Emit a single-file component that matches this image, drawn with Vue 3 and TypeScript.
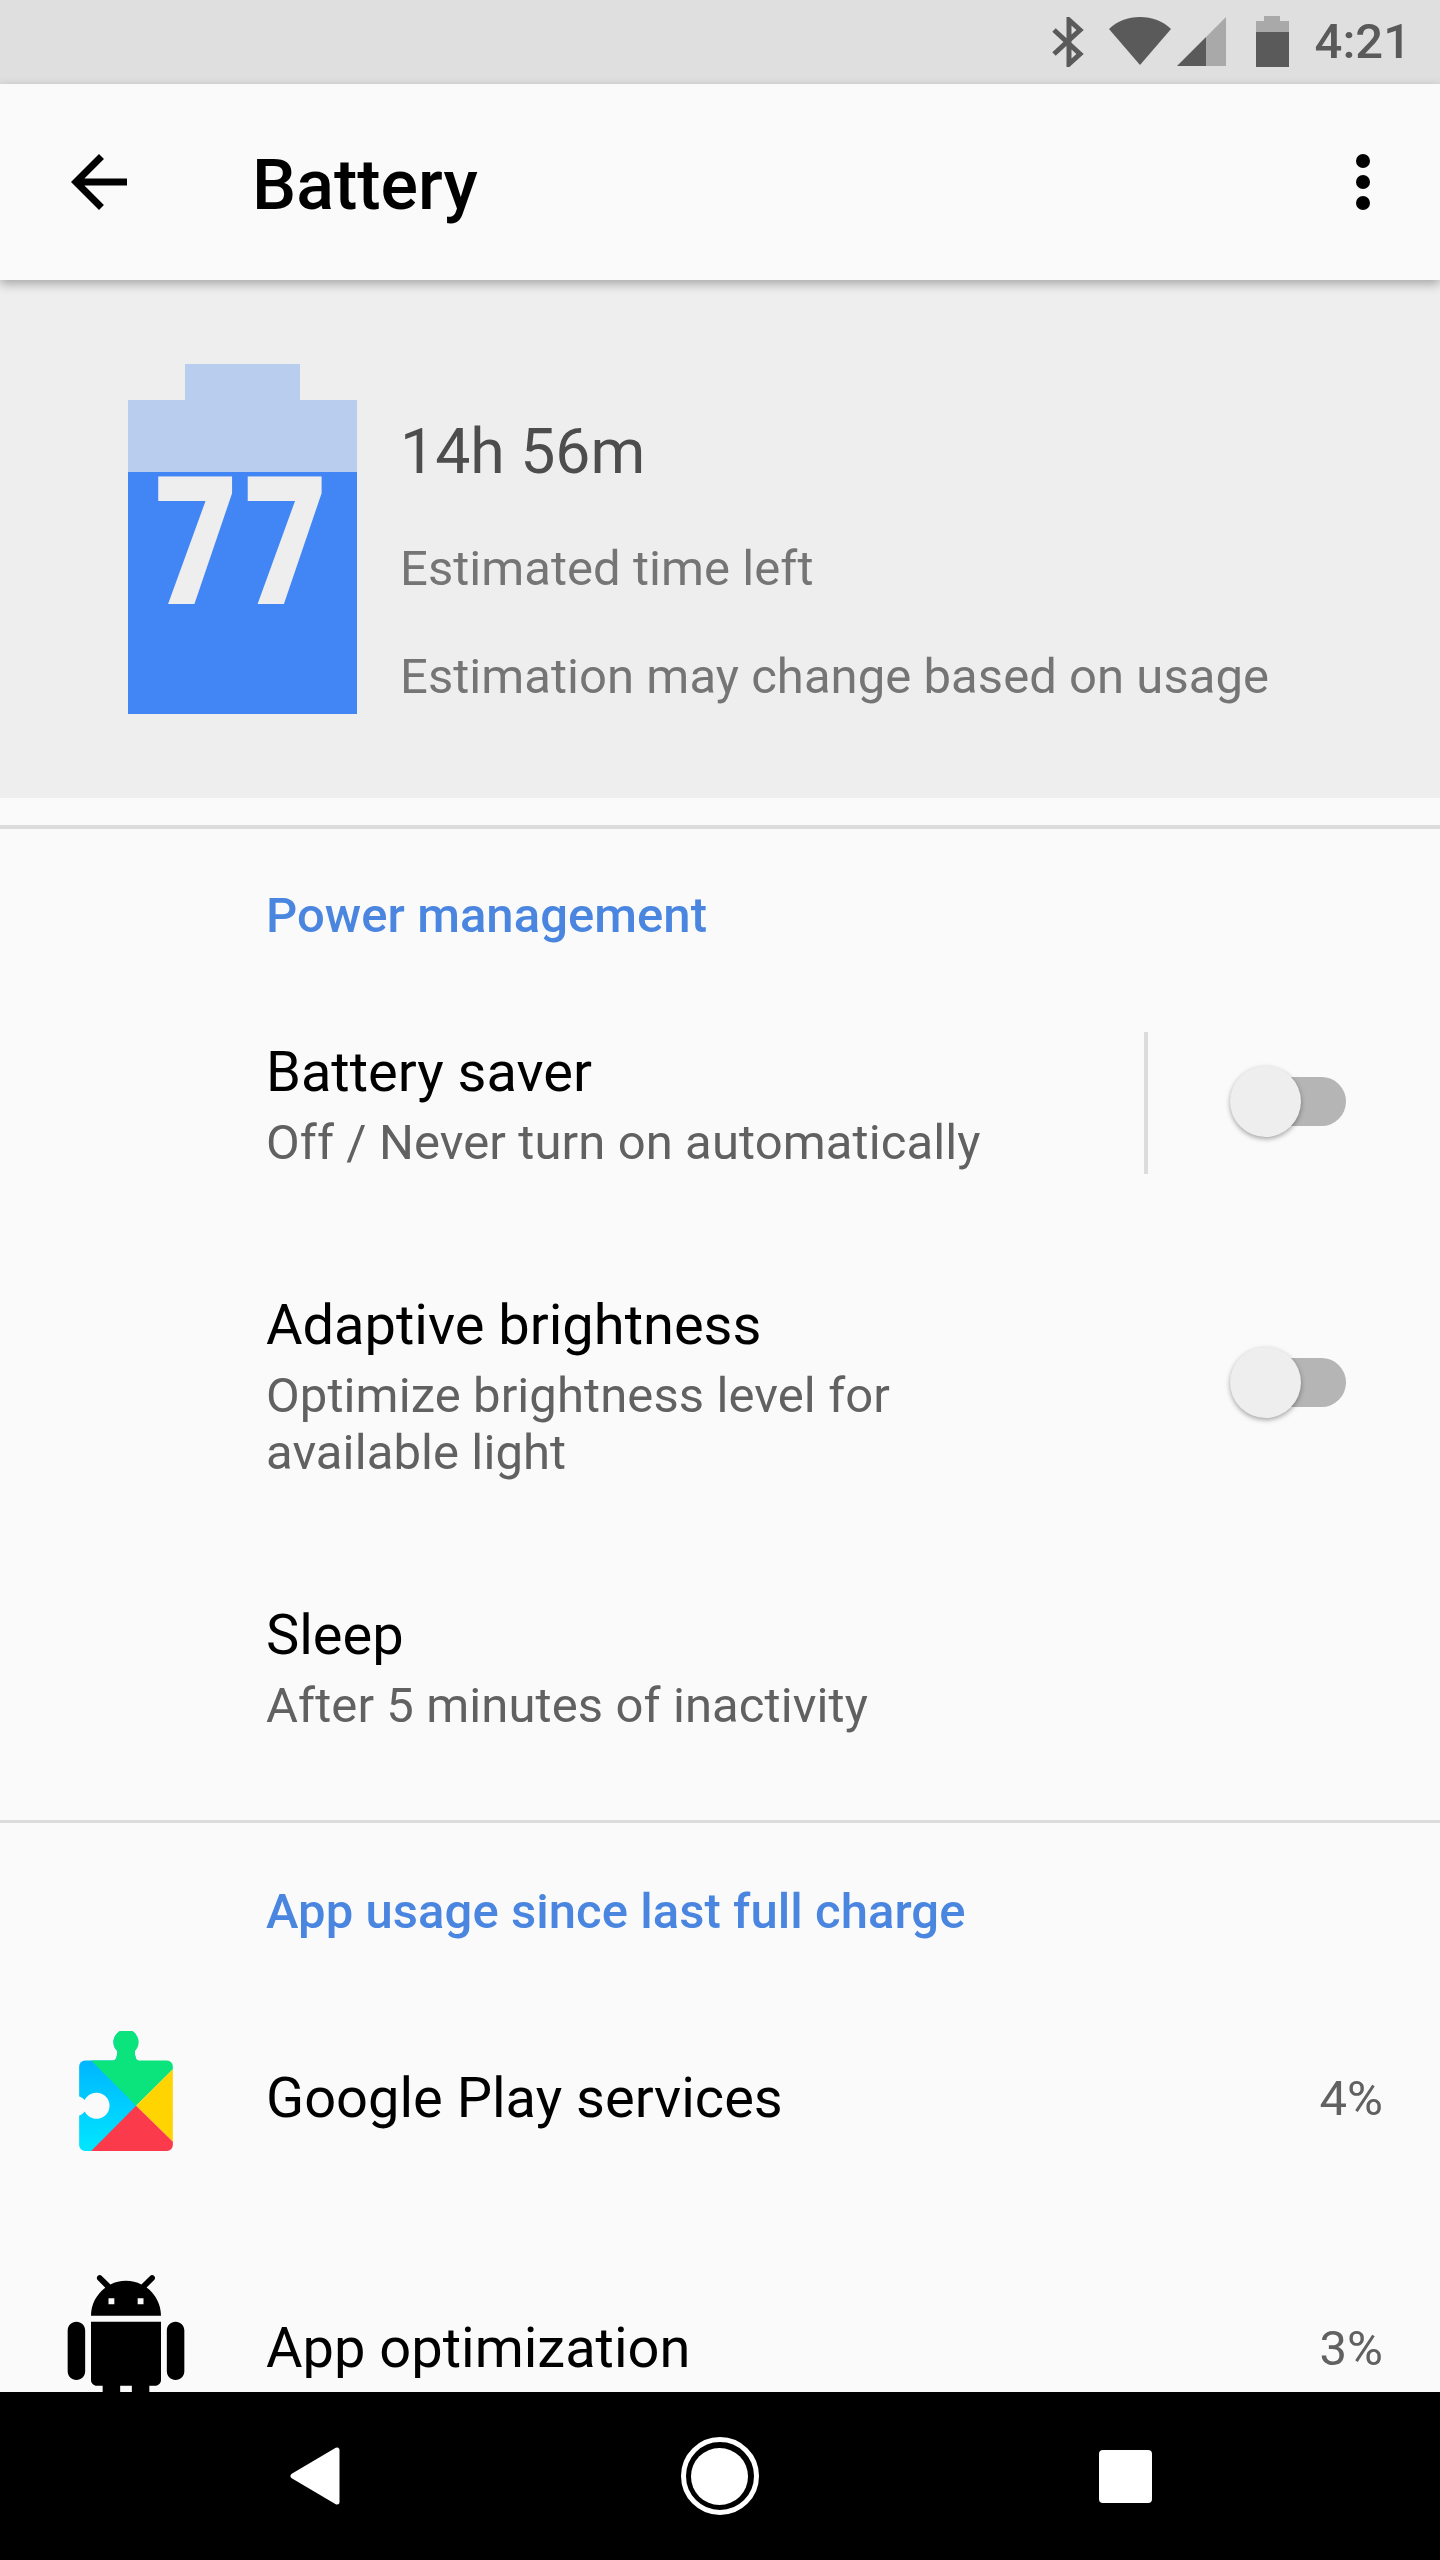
<script setup lang="ts">
interface SettingRow {
  title: string
  lines: string[]
  toggle: boolean
  separated?: boolean
}

const settings: SettingRow[] = [
  { title: 'Battery saver', lines: ['Off / Never turn on automatically'], toggle: true, separated: true },
  { title: 'Adaptive brightness', lines: ['Optimize brightness level for', 'available light'], toggle: true },
  { title: 'Sleep', lines: ['After 5 minutes of inactivity'], toggle: false },
]
</script>

<template>
  <div class="phone">
    <!-- status bar -->
    <div class="status">
      <svg class="st-bt" width="32" height="50" viewBox="0 0 32 50" fill="none" stroke="#5a5a5a" stroke-width="5">
        <path d="M2 13l26 24-11 10V3l11 10L2 37" />
      </svg>
      <svg class="st-wifi" width="62" height="48" viewBox="0 0 62 48"><path d="M0 12C8 4 19 0 31 0s23 4 31 12L31 48z" fill="#5a5a5a" /></svg>
      <svg class="st-signal" width="49" height="49" viewBox="0 0 49 49">
        <path d="M49 0v49H29V20z" fill="#a9a9a9" />
        <path d="M0 49l29-29v29z" fill="#5a5a5a" />
      </svg>
      <div class="st-batt">
        <div class="st-batt-cap"></div>
        <div class="st-batt-top"></div>
        <div class="st-batt-fill"></div>
      </div>
      <span class="st-time">4:21</span>
    </div>

    <!-- app bar -->
    <header class="appbar">
      <svg class="back" width="84" height="84" viewBox="0 0 24 24">
        <path d="M20 11H7.83l5.59-5.59L12 4l-8 8 8 8 1.41-1.41L7.83 13H20v-2z" fill="#000" />
      </svg>
      <h1 class="appbar-title">Battery</h1>
      <div class="dots"><i></i><i></i><i></i></div>
    </header>

    <div class="content">
      <section class="hero">
        <div class="battery">
          <div class="battery-cap"></div>
          <div class="battery-top"></div>
          <div class="battery-fill"><span class="battery-num">77</span></div>
        </div>
        <div class="hero-text">
          <div class="hero-time">14h 56m</div>
          <div class="hero-line hero-line--first">Estimated time left</div>
          <div class="hero-line hero-line--second">Estimation may change based on usage</div>
        </div>
      </section>

      <div class="divider divider--hero"></div>

      <h2 class="section-title section-title--power">Power management</h2>

      <div
        v-for="row in settings"
        :key="row.title"
        class="row"
        :class="{ 'row--first': row.separated }"
      >
        <div class="row-text">
          <div class="row-title">{{ row.title }}</div>
          <div v-for="line in row.lines" :key="line" class="row-sub">{{ line }}</div>
        </div>
        <div v-if="row.toggle" class="row-end" :class="{ 'row-end--separated': row.separated }">
          <div class="switch">
            <div class="switch-thumb"></div>
          </div>
        </div>
      </div>

      <div class="divider divider--usage"></div>

      <h2 class="section-title section-title--usage">App usage since last full charge</h2>

      <div class="app-row">
        <div class="app-icon">
          <svg class="icon-play" width="94" height="120" viewBox="0 0 93.3 119.3">
            <defs>
              <linearGradient id="playBlue" x1="0" y1="0" x2="0" y2="1">
                <stop offset="0" stop-color="#00a6ff" />
                <stop offset="1" stop-color="#00e6ff" />
              </linearGradient>
              <clipPath id="puzzle">
                <path d="M6 29.3H34Q38 29 38 20A12.5 12.5 0 1 1 55.4 20Q55.4 29 59.4 29.3H87.3A6 6 0 0 1 93.3 35.3V113.3A6 6 0 0 1 87.3 119.3H6A6 6 0 0 1 0 113.3V84Q2 84 5.6 80A13 13 0 1 0 5.6 68.6Q2 65 0 65V35.3A6 6 0 0 1 6 29.3Z" />
              </clipPath>
            </defs>
            <g clip-path="url(#puzzle)">
              <path d="M0 0H56.7V119.3H0Z" fill="url(#playBlue)" />
              <path d="M56.7 74.3L93.3 38V0H12V29.3Z" fill="#0be37d" />
              <path d="M56.7 74.3L93.3 38V110Z" fill="#ffd400" />
              <path d="M56.7 74.3L93.3 110V119.3H12Z" fill="#fb3a4c" />
            </g>
          </svg>
        </div>
        <div class="app-name">Google Play services</div>
        <div class="app-pct">4%</div>
      </div>

      <div class="app-row">
        <div class="app-icon">
          <svg class="icon-android" width="140" height="140" viewBox="0 0 24 24">
            <path d="M6 18c0 .55.45 1 1 1h1v3.5c0 .83.67 1.5 1.5 1.5s1.5-.67 1.5-1.5V19h2v3.5c0 .83.67 1.5 1.5 1.5s1.5-.67 1.5-1.5V19h1c.55 0 1-.45 1-1V8H6v10zM3.5 8C2.67 8 2 8.67 2 9.5v7c0 .83.67 1.5 1.5 1.5S5 17.33 5 16.5v-7C5 8.67 4.33 8 3.5 8zm17 0c-.83 0-1.5.67-1.5 1.5v7c0 .83.67 1.5 1.5 1.5s1.5-.67 1.5-1.5v-7c0-.83-.67-1.5-1.5-1.5zm-4.97-5.84l1.3-1.3c.2-.2.2-.51 0-.71-.2-.2-.51-.2-.71 0l-1.48 1.48C13.85 1.23 12.95 1 12 1c-.96 0-1.86.23-2.66.63L7.85.15c-.2-.2-.51-.2-.71 0-.2.2-.2.51 0 .71l1.31 1.31C6.97 3.26 6 5.01 6 7h12c0-1.99-.97-3.75-2.47-4.84zM10 5H9V4h1v1zm5 0h-1V4h1v1z" fill="#000" />
          </svg>
        </div>
        <div class="app-name">App optimization</div>
        <div class="app-pct">3%</div>
      </div>
    </div>

    <!-- nav bar -->
    <nav class="navbar">
      <svg width="50" height="58" viewBox="0 0 50 58" class="nav-back">
        <path d="M47 3v52L3 29z" fill="#fff" stroke="#fff" stroke-width="5" stroke-linejoin="round" />
      </svg>
      <div class="nav-home"><div class="nav-home-dot"></div></div>
      <div class="nav-recent"></div>
    </nav>
  </div>
</template>

<style>
html,
body {
  margin: 0;
  background: #fafafa;
}
</style>

<style scoped>
.phone {
  display: flex;
  flex-direction: column;
  width: 1440px;
  height: 2560px;
  overflow: hidden;
  background: #fafafa;
  font-family: Roboto, "Liberation Sans", sans-serif;
}

.status {
  display: flex;
  align-items: flex-start;
  flex: none;
  height: 84px;
  box-sizing: border-box;
  padding: 16px 29px 0 0;
  justify-content: flex-end;
  background: #dfdfdf;
}

.st-bt {
  margin-top: 1px;
}

.st-wifi {
  margin: 1px 0 0 25px;
}

.st-signal {
  margin: 1px 0 0 6px;
}

.st-batt {
  display: flex;
  flex-direction: column;
  align-items: center;
  width: 33px;
  margin-left: 30px;
}

.st-batt-cap {
  width: 16px;
  height: 5px;
  background: #a9a9a9;
}

.st-batt-top {
  width: 33px;
  height: 11px;
  background: #a9a9a9;
}

.st-batt-fill {
  width: 33px;
  height: 35px;
  background: #5a5a5a;
}

.st-time {
  margin-left: 26px;
  font-size: 49px;
  font-weight: 500;
  line-height: 52px;
  color: #5a5a5a;
}

.appbar {
  position: relative;
  z-index: 1;
  display: flex;
  align-items: center;
  flex: none;
  height: 196px;
  box-sizing: border-box;
  padding: 0 0 0 52px;
  background: #fafafa;
  box-shadow: 0 4px 10px rgba(0, 0, 0, 0.3);
}

.back {
  margin-left: 5px;
}

.appbar-title {
  margin: 6px 0 0 111px;
  font-size: 70px;
  font-weight: 500;
  color: #000;
}

.dots {
  display: flex;
  flex-direction: column;
  gap: 7px;
  margin-left: auto;
  margin-right: 70px;
}

.dots i {
  display: block;
  width: 14px;
  height: 14px;
  border-radius: 50%;
  background: #000;
}

.content {
  flex: 1;
  min-height: 0;
  overflow: hidden;
}

.hero {
  display: flex;
  height: 518px;
  box-sizing: border-box;
  padding: 84px 0 0 128px;
  background: #eeeeee;
}

.battery {
  display: flex;
  flex-direction: column;
  align-items: center;
  flex: none;
  width: 229px;
}

.battery-cap {
  width: 115px;
  height: 36px;
  background: #b9ceef;
}

.battery-top {
  width: 229px;
  height: 72px;
  background: #b9ceef;
}

.battery-fill {
  display: flex;
  justify-content: center;
  width: 229px;
  height: 242px;
  background: #4285f4;
}

.battery-num {
  display: inline-block;
  margin-left: 5px;
  font-size: 176px;
  font-weight: 900;
  line-height: 142px;
  letter-spacing: 10px;
  color: #eeeeee;
  -webkit-text-stroke: 2px #eeeeee;
  transform: scaleX(0.8);
}

.hero-text {
  margin-left: 43px;
  padding-top: 49px;
}

.hero-time {
  font-size: 62.5px;
  line-height: 78px;
  color: #4d4d4d;
}

.hero-line {
  font-size: 49px;
  line-height: 57px;
  letter-spacing: 0.05px;
  color: #757575;
}

.hero-line--first {
  margin-top: 49px;
}

.hero-line--second {
  margin-top: 51px;
}

.divider {
  height: 3px;
  background: #dcdcdc;
}

.divider--hero {
  height: 4px;
  margin-top: 27px;
}

.divider--usage {
  margin-top: 30px;
}

.section-title {
  margin: 0 0 0 266px;
  font-size: 49px;
  font-weight: 500;
  line-height: 57px;
  letter-spacing: 0.05px;
  color: #4a86e0;
}

.section-title--power {
  padding: 58px 0 27px;
}

.section-title--usage {
  padding: 60px 0 33px;
}

.row {
  display: flex;
  align-items: center;
  padding: 57px 0 56px 266px;
}

.row--first {
  padding-bottom: 53px;
}

.row-text {
  flex: 1;
}

.row-title {
  font-size: 56px;
  line-height: 83px;
  color: #000;
}

.row-sub {
  font-size: 49px;
  line-height: 57px;
  letter-spacing: 0.1px;
  color: #616161;
}

.row-end {
  display: flex;
  align-items: center;
  justify-content: flex-end;
  width: 296px;
  height: 142px;
  box-sizing: border-box;
  padding-right: 94px;
}

.row-end--separated {
  margin-top: 4px;
  padding-bottom: 4px;
  border-left: 4px solid #dcdcdc;
}

.switch {
  position: relative;
  width: 109px;
  height: 49px;
  border-radius: 25px;
  background: #b5b5b5;
}

.switch-thumb {
  position: absolute;
  top: -11px;
  left: -7px;
  width: 71px;
  height: 71px;
  border-radius: 50%;
  background: #eeeeee;
  box-shadow: 0 2px 5px rgba(0, 0, 0, 0.35);
}

.app-row {
  display: flex;
  align-items: center;
  height: 250px;
}

.app-icon {
  display: flex;
  align-items: center;
  justify-content: center;
  flex: none;
  width: 252px;
  margin-right: 14px;
}

.icon-play {
  margin-bottom: 15px;
}

.icon-android {
  margin-bottom: 6px;
}

.app-name {
  flex: 1;
  font-size: 56px;
  color: #000;
}

.app-pct {
  padding-right: 57px;
  font-size: 49px;
  color: #616161;
}

.navbar {
  display: flex;
  align-items: center;
  justify-content: space-between;
  flex: none;
  height: 168px;
  box-sizing: border-box;
  padding: 0 288px 0 290px;
  background: #000;
}

.nav-home {
  display: flex;
  align-items: center;
  justify-content: center;
  width: 78px;
  height: 78px;
  box-sizing: border-box;
  border: 5px solid #fff;
  border-radius: 50%;
}

.nav-home-dot {
  width: 57px;
  height: 57px;
  border-radius: 50%;
  background: #fff;
}

.nav-recent {
  width: 53px;
  height: 53px;
  border-radius: 4px;
  background: #fff;
}
</style>
